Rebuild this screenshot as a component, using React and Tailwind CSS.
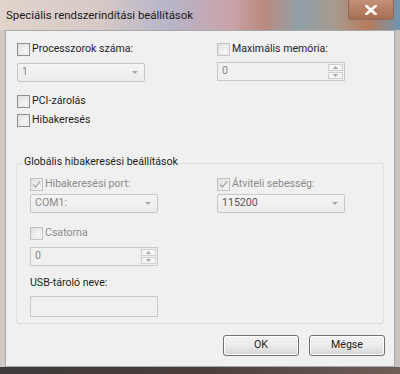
import React from "react";

const font = { fontFamily: "Roboto, 'Noto Sans', sans-serif" };

function Check({ checked, disabled }) {
  return (
    <span
      className={`relative inline-block w-[13px] h-[13px] shrink-0 border ${
        disabled ? "border-[#c2c2c2]" : "border-[#8f8f8f]"
      } bg-gradient-to-br from-[#dcdcdc] to-[#f8f8f8]`}
    >
      <span className="absolute inset-[1px] border border-[#e8e8e8] bg-gradient-to-br from-[#e4e4e4] to-[#fbfbfb]" />
      {checked && (
        <svg className="absolute inset-0" width="11" height="11" viewBox="0 0 11 11">
          <path d="M2 5.5 L4.5 8 L9 2.5" fill="none" stroke="#a8a8a8" strokeWidth="1.4" />
        </svg>
      )}
    </span>
  );
}

function CheckRow({ label, checked, disabled, grayText }) {
  return (
    <div className="flex items-center gap-[2px] h-[13px]">
      <Check checked={checked} disabled={disabled} />
      <span className={`text-[10.6px] leading-none ${grayText ? "text-[#8c8c8c]" : "text-[#1e1e1e]"}`}>{label}</span>
    </div>
  );
}

function Combo({ value, dark }) {
  return (
    <div className="flex items-center justify-between w-[128px] h-[19px] border border-[#c6c6c6] rounded-[2px] bg-gradient-to-b from-[#f4f4f4] to-[#ececec] pl-[4px] pr-[6px]">
      <span className={`text-[10.6px] leading-none ${dark ? "text-[#555555]" : "text-[#8a8a8a]"}`}>{value}</span>
      <svg width="6" height="3" viewBox="0 0 6 3">
        <path d="M0 0 H6 L3 3 Z" fill="#a5a5a5" />
      </svg>
    </div>
  );
}

function Spin({ value }) {
  return (
    <div className="flex items-center justify-between w-[128px] h-[19px] border border-[#c9c9c9] bg-[#f0f0f0] pl-[4px] pr-[1px]">
      <span className="text-[10.6px] leading-none text-[#8a8a8a]">{value}</span>
      <div className="flex flex-col gap-[1px]">
        <div className="w-[15px] h-[7px] border border-[#d0d0d0] bg-[#f5f5f5] flex items-center justify-center">
          <svg width="5" height="3" viewBox="0 0 5 3"><path d="M0 3 H5 L2.5 0 Z" fill="#a8a8a8" /></svg>
        </div>
        <div className="w-[15px] h-[7px] border border-[#d0d0d0] bg-[#f5f5f5] flex items-center justify-center">
          <svg width="5" height="3" viewBox="0 0 5 3"><path d="M0 0 H5 L2.5 3 Z" fill="#a8a8a8" /></svg>
        </div>
      </div>
    </div>
  );
}

function Button({ children }) {
  return (
    <div className="w-[76px] h-[21px] rounded-[3px] border border-[#707070] bg-gradient-to-b from-[#f2f2f2] via-[#ebebeb] to-[#d6d6d6] flex items-center justify-center shadow-[inset_0_0_0_1px_#fcfcfc]">
      <span className="text-[10.6px] leading-none text-[#1e1e1e]">{children}</span>
    </div>
  );
}

export default function App() {
  return (
    <div
      className="w-[400px] h-[374px] overflow-hidden flex flex-col bg-gradient-to-r from-[#d9cfc9] via-[#b8a7b6] to-[#7f98ae]"
      style={font}
    >
      {/* title bar */}
      <div className="h-[30px] shrink-0 relative bg-[linear-gradient(90deg,#e0d4cc_0%,#d6c9c6_25%,#b7b5c9_42%,#c9a3a8_58%,#b98a7e_66%,#8fa0a8_75%,#a89a8e_84%,#b87a5c_92%,#6e96b2_100%)]">
        <div className="absolute left-[6px] top-[10px] text-[11.4px] leading-none text-[#1a1a1a]">
          Speciális rendszerindítási beállítások
        </div>
        <div className="absolute left-[348px] top-0 w-[46px] h-[20px] rounded-b-[4px] border border-t-0 border-[#8a6a5c] bg-gradient-to-b from-[#c49078] to-[#a86e52] flex items-center justify-center">
          <svg width="12" height="10" viewBox="0 0 12 10">
            <path d="M1.5 1 L10.5 9 M10.5 1 L1.5 9" stroke="#ffffff" strokeWidth="2.6" strokeLinecap="square" />
          </svg>
        </div>
      </div>
      {/* frame around client */}
      <div className="flex-1 flex flex-col px-[5px] bg-[linear-gradient(90deg,#cfc9c6,#c9c3c0)]">
        <div className="h-[337px] shrink-0 border border-[#a9a9a9] bg-[#f0f0f0] pl-[11px] pr-[9px] pt-[12px] flex flex-col">
          <div className="grid grid-cols-[200px_1fr]">
            <div className="flex flex-col">
              <CheckRow label="Processzorok száma:" />
              <div className="mt-[7px]"><Combo value="1" /></div>
            </div>
            <div className="flex flex-col">
              <CheckRow label="Maximális memória:" disabled />
              <div className="mt-[6px]"><Spin value="0" /></div>
            </div>
          </div>
          <div className="mt-[13px] flex flex-col gap-[6px]">
            <CheckRow label="PCI-zárolás" />
            <CheckRow label="Hibakeresés" />
          </div>
          {/* group box */}
          <div className="relative mt-[36px] ml-[-1px] w-[368px] h-[161px] border border-[#d5dfe5] rounded-[3px] pl-[13px] pt-[14px] flex flex-col">
            <div className="absolute left-[6px] top-[-7px] px-[1px] bg-[#f0f0f0] text-[10.6px] leading-none text-[#1e1e1e]">
              Globális hibakeresési beállítások
            </div>
            <div className="grid grid-cols-[187px_1fr]">
              <div className="flex flex-col">
                <CheckRow label="Hibakeresési port:" checked disabled grayText />
                <div className="mt-[3px]"><Combo value="COM1:" /></div>
              </div>
              <div className="flex flex-col">
                <CheckRow label="Átviteli sebesség:" checked disabled grayText />
                <div className="mt-[3px]"><Combo value="115200" dark /></div>
              </div>
            </div>
            <div className="mt-[14px]">
              <CheckRow label="Csatorna" disabled grayText />
            </div>
            <div className="mt-[7px]"><Spin value="0" /></div>
            <div className="mt-[12px] text-[10.6px] leading-none text-[#1e1e1e]">USB-tároló neve:</div>
            <div className="mt-[7px] w-[128px] h-[21px] border border-[#c9c9c9] bg-[#f0f0f0]" />
          </div>
          <div className="mt-[11px] flex justify-end gap-[10px]">
            <Button>OK</Button>
            <Button>Mégse</Button>
          </div>
        </div>
        <div className="flex-1 bg-gradient-to-r from-[#3d3a3a] via-[#4a3e3a] to-[#6e5e58] -mx-[5px]" />
      </div>
    </div>
  );
}
